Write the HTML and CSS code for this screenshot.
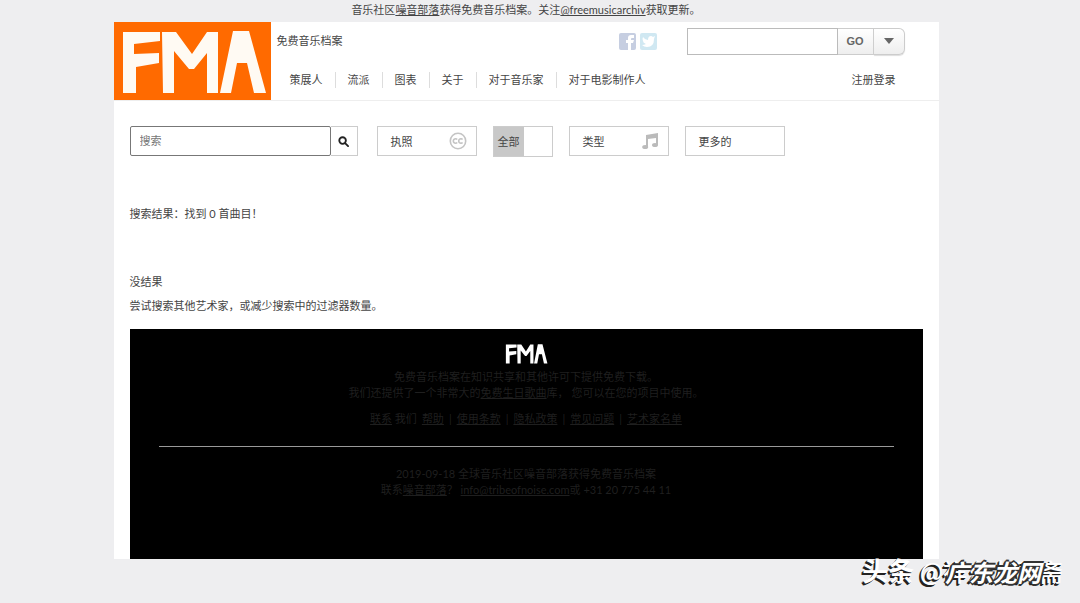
FILE: index.html
```html
<!DOCTYPE html>
<html lang="zh-CN">
<head>
<meta charset="utf-8">
<meta name="viewport" content="width=device-width, initial-scale=1">
<title>免费音乐档案</title>
<link rel="stylesheet" href="styles.css">
</head>
<body>
<div class="notice">音乐社区<a href="#">噪音部落</a>获得免费音乐档案。关注<a href="#">@freemusicarchiv</a>获取更新。</div>
<div class="page">
  <header class="header">
    <a class="logo" href="#" aria-label="FMA">
      <svg viewBox="0 0 157 78" fill="#fffaf3"><path d="M9 10H46V19L20 22V32L45 31V41L22 45V71H9Z"/><path d="M48 10H62L78 32L93 10H104V71H93V31L80 47H75L60 29V71H49Z"/><path d="M119 9H135L152 71H140L133 41H123L117 71H106Z"/></svg>
    </a>
    <div class="header-body">
      <div class="header-top">
        <span class="site-name">免费音乐档案</span>
        <div class="social">
          <a href="#" aria-label="Facebook"><svg viewBox="0 0 17 17"><rect width="17" height="17" rx="2" fill="#c6cee1"/><path d="M9 17V10H7V7H9V5Q9 2 12 2H15V5H13Q12 5 12 6V7H15L14 10H12V17Z" fill="#fff"/></svg></a>
          <a href="#" aria-label="Twitter"><svg viewBox="0 0 17 17"><rect width="17" height="17" rx="2" fill="#d0e8f2"/><path d="M3 4Q5 7 8 7Q8 3 11 3Q12 3 13 4L15 3L14 6Q14 14 7 14Q4 14 2 12Q4 12 6 11Q3 10 3 8Q2 6 3 4Z" fill="#fff"/></svg></a>
        </div>
        <form class="quick">
          <input class="quick-input" type="text" aria-label="快速搜索">
          <button class="quick-go" type="button">GO</button>
          <button class="quick-menu" type="button" aria-label="选项"><svg viewBox="0 0 10 6"><path d="M0 0H10L5 6Z" fill="#666"/></svg></button>
        </form>
      </div>
      <div class="header-bottom">
        <nav class="nav"><a href="#">策展人</a><a href="#">流派</a><a href="#">图表</a><a href="#">关于</a><a href="#">对于音乐家</a><a href="#">对于电影制作人</a></nav>
        <a class="account" href="#">注册登录</a>
      </div>
    </div>
  </header>
  <main class="main">
    <form class="filters">
      <div class="search">
        <input class="search-input" type="text" placeholder="搜索" aria-label="搜索">
        <button class="search-button" type="button" aria-label="开始搜索"><svg viewBox="0 0 12 12" fill="none" stroke="#222" stroke-width="2"><circle cx="5" cy="5" r="3.6"/><path d="M8 8L11 11" stroke-linecap="round"/></svg></button>
      </div>
      <button class="filter" type="button">执照<svg class="cc" viewBox="0 0 18 18" fill="none" stroke="#c4c4c4" stroke-width="1.6"><circle cx="9" cy="9" r="7.7"/><path d="M8.2 7.6A2.2 2.2 0 1 0 8.2 10.4M13.6 7.6A2.2 2.2 0 1 0 13.6 10.4"/></svg></button>
      <button class="all" type="button"><span>全部</span></button>
      <button class="filter" type="button">类型<svg class="note" viewBox="0 0 18 18"><path fill="#bbb" d="M5 3L17 1V13H15V6L7 7V15H5Z"/><ellipse cx="4.2" cy="15" rx="3" ry="2" fill="#bbb"/><ellipse cx="14" cy="13" rx="3" ry="2" fill="#bbb"/></svg></button>
      <button class="filter" type="button">更多的</button>
    </form>
    <p class="result">搜索结果：找到 0 首曲目！</p>
    <p class="empty">没结果</p>
    <p class="hint">尝试搜索其他艺术家，或减少搜索中的过滤器数量。</p>
    <footer class="footer">
      <svg class="footer-logo" viewBox="6 8 148 65" preserveAspectRatio="none" fill="#fff" role="img" aria-label="FMA"><path d="M9 10H46V19L20 22V32L45 31V41L22 45V71H9Z"/><path d="M48 10H62L78 32L93 10H104V71H93V31L80 47H75L60 29V71H49Z"/><path d="M119 9H135L152 71H140L133 41H123L117 71H106Z"/></svg>
      <p>免费音乐档案在知识共享和其他许可下提供免费下载。<br>我们还提供了一个非常大的<a href="#">免费生日歌曲</a>库， 您可以在您的项目中使用。</p>
      <p class="links"><span><a href="#">联系</a> 我们</span><a href="#">帮助</a><i>|</i><a href="#">使用条款</a><i>|</i><a href="#">隐私政策</a><i>|</i><a href="#">常见问题</a><i>|</i><a href="#">艺术家名单</a></p>
      <hr>
      <p>2019-09-18 全球音乐社区噪音部落获得免费音乐档案<br>联系<a href="#">噪音部落</a>？ <a href="#">info@tribeofnoise.com</a>或 +31 20 775 44 11</p>
    </footer>
  </main>
</div>
<div class="watermark"><strong>头条</strong> @祥东龙网斋<b>广东龙网</b></div>
</body>
</html>
```
FILE: styles.css
```css
* { box-sizing: border-box; }
body {
  margin: 0;
  padding-right: 28px;
  min-height: 100vh;
  background: #eeeef0;
  color: #444;
  font: 11px/16px Lato, "Noto Sans CJK SC", sans-serif;
}
a { color: inherit; }
p { margin: 0; }
button, input { font: inherit; color: inherit; padding: 0; margin: 0; border-radius: 0; }
svg { display: block; }
.notice { height: 22px; padding-top: 2px; text-align: center; }
.page { max-width: 825px; margin: 0 auto; background: #fff; }
.header { display: flex; border-bottom: 1px solid #eee; }
.logo { flex: none; width: 157px; height: 78px; background: #ff6a00; }
.header-body { flex: 1; padding: 5px 34px 0 6px; }
.header-top { display: flex; align-items: center; height: 28px; }
.social { display: flex; gap: 4px; margin-left: auto; }
.social svg { width: 17px; height: 17px; }
.quick { display: flex; height: 27px; margin-left: 30px; }
.quick-input { width: 151px; border: 1px solid #bbb; background: #fff; }
.quick-go, .quick-menu { border: 1px solid #ccc; border-left: 0; background: linear-gradient(#fff, #eee); }
.quick-go { width: 36px; color: #666; font-family: "Liberation Sans", sans-serif; font-weight: bold; }
.quick-menu { width: 31px; border-radius: 0 6px 6px 0; display: grid; place-items: center; box-shadow: 0 1px 1px #ddd; }
.quick-menu svg { width: 10px; height: 6px; }
.header-bottom { display: flex; justify-content: space-between; align-items: center; padding: 17px 9px 0 1px; }
.header-bottom a { text-decoration: none; }
.nav a { display: inline-block; padding: 0 12px; line-height: 16px; }
.nav a + a { border-left: 1px solid #ddd; }
.main { padding: 25px 16px 0; }
.filters { display: flex; gap: 16px; align-items: flex-start; }
.search { display: flex; height: 30px; margin-right: 3px; }
.search-input { width: 201px; border: 1px solid #777; border-radius: 2px; padding: 0 9px; }
.search-input::placeholder { color: #777; }
.search-button { width: 27px; border: 1px solid #ccc; border-left: 0; background: #fff; display: grid; place-items: center; }
.search-button svg { width: 11px; height: 11px; }
.filter { display: flex; align-items: center; justify-content: space-between; width: 100px; height: 30px; border: 1px solid #ccc; background: #fff; padding: 2px 9px 0 13px; }
.cc, .note { width: 18px; height: 18px; margin-bottom: 3px; }
.all { width: 60px; height: 31px; border: 1px solid #ccc; background: #fff; text-align: left; }
.all span { display: block; width: 30px; height: 29px; line-height: 29px; padding-left: 4px; background: #c8c8c8; }
.result { margin-top: 49px; }
.empty { margin-top: 52px; }
.hint { margin-top: 8px; }
.footer { margin-top: 15px; height: 230px; padding: 15px 29px; background: #000; color: #1f1f1f; text-align: center; }
.footer-logo { width: 43px; height: 20px; margin: 0 auto 5px; }
.links { display: flex; justify-content: center; gap: 5px; margin-top: 10px; }
.links i { font-style: normal; }
.footer hr { height: 1px; margin: 19px 0; border: 0; background: #999; }
.footer p { white-space: nowrap; }
.watermark { position: absolute; right: 17px; bottom: 14px; color: #fff; font: 500 24px/36px "Noto Sans CJK SC", sans-serif; white-space: nowrap; text-shadow: -1px 1px #222, -2px 2px #222; }
.watermark strong { font-size: 26px; }
.watermark b { position: absolute; right: 22px; top: 2px; font-size: 24px; font-style: italic; text-shadow: -2px 0 #333, 2px 0 #333, 0 -2px #333, 0 2px #333, 1px 1px #333, -1px -1px #333; }
```
